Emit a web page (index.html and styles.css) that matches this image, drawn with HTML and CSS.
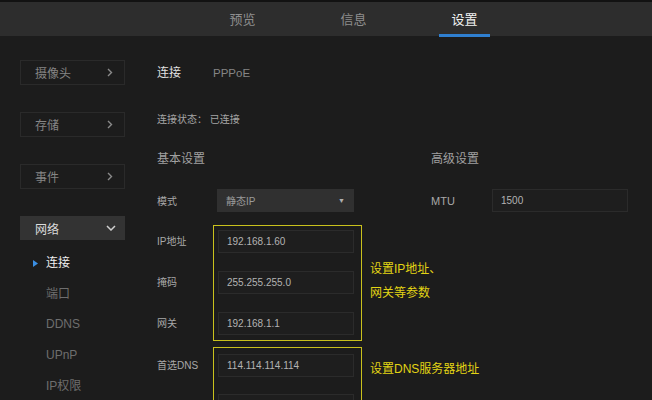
FILE: index.html
```html
<!DOCTYPE html>
<html lang="zh">
<head>
<meta charset="utf-8">
<title>设置</title>
<link rel="stylesheet" href="styles.css">
</head>
<body>
<header class="topbar">
  <nav class="tabs">
    <div class="tab">预览</div>
    <div class="tab">信息</div>
    <div class="tab active">设置</div>
  </nav>
</header>
<div class="layout">
  <aside class="sidebar">
    <div class="menu-box"><span>摄像头</span><svg class="chev" width="6" height="9" viewBox="0 0 6 9"><polyline points="1,1 4.5,4.5 1,8" fill="none" stroke="#8a8a8a" stroke-width="1.4"/></svg></div>
    <div class="menu-box"><span>存储</span><svg class="chev" width="6" height="9" viewBox="0 0 6 9"><polyline points="1,1 4.5,4.5 1,8" fill="none" stroke="#8a8a8a" stroke-width="1.4"/></svg></div>
    <div class="menu-box"><span>事件</span><svg class="chev" width="6" height="9" viewBox="0 0 6 9"><polyline points="1,1 4.5,4.5 1,8" fill="none" stroke="#8a8a8a" stroke-width="1.4"/></svg></div>
    <div class="menu-box open"><span>网络</span><svg class="chev-down" width="10" height="6" viewBox="0 0 10 6"><polyline points="1,1 5,5 9,1" fill="none" stroke="#cfcfcf" stroke-width="1.5"/></svg></div>
    <ul class="submenu">
      <li class="current"><svg class="marker" width="5" height="7" viewBox="0 0 5 7"><polygon points="0,0 5,3.5 0,7" fill="#3b8fe3"/></svg>连接</li>
      <li>端口</li>
      <li>DDNS</li>
      <li>UPnP</li>
      <li>IP权限</li>
    </ul>
  </aside>
  <main class="content">
    <div class="conn-tabs"><span class="conn-active">连接</span><span class="conn-other">PPPoE</span></div>
    <div class="status">连接状态： 已连接</div>
    <div class="two-col heads">
      <div class="section-title">基本设置</div>
      <div class="section-title">高级设置</div>
    </div>
    <div class="two-col">
      <div class="row">
        <label class="lbl lbl-mode">模式</label>
        <div class="select"><span>静态IP</span><span class="caret">▼</span></div>
      </div>
      <div class="row">
        <label class="lbl lbl-mtu">MTU</label>
        <div class="input">1500</div>
      </div>
    </div>
    <div class="group g1">
      <div class="labels">
        <div class="lbl">IP地址</div>
        <div class="lbl">掩码</div>
        <div class="lbl">网关</div>
      </div>
      <div class="frame">
        <div class="input">192.168.1.60</div>
        <div class="input">255.255.255.0</div>
        <div class="input">192.168.1.1</div>
      </div>
      <div class="note note1">设置IP地址、<br>网关等参数</div>
    </div>
    <div class="group g2">
      <div class="labels labels2">
        <div class="lbl">首选DNS</div>
      </div>
      <div class="frame frame2">
        <div class="input">114.114.114.114</div>
        <div class="input"></div>
      </div>
      <div class="note note2">设置DNS服务器地址</div>
    </div>
  </main>
</div>
</body>
</html>
```
FILE: styles.css
```css
* { box-sizing: border-box; }
html, body {
  margin: 0;
  padding: 0;
  width: 652px;
  height: 400px;
  overflow: hidden;
  background: #1c1c1c;
  font-family: "Liberation Sans", "Noto Sans CJK SC", sans-serif;
  color: #999;
}

.topbar {
  height: 36px;
  background: #2d2d2d;
  border-top: 2px solid #121212;
}
.tabs {
  display: flex;
  padding-left: 187px;
  height: 34px;
}
.tab {
  width: 111px;
  display: flex;
  justify-content: center;
  align-items: center;
  font-size: 13px;
  color: #8e8e8e;
  padding-bottom: 2px;
  position: relative;
}
.tab.active { color: #f2f2f2; }
.tab.active::after {
  content: "";
  position: absolute;
  left: 30px;
  right: 30px;
  bottom: -1px;
  height: 3px;
  background: #2f7fd0;
}

.layout { display: flex; }

.sidebar {
  width: 157px;
  padding-left: 20px;
  padding-top: 24px;
  flex-shrink: 0;
}
.menu-box {
  width: 105px;
  height: 25px;
  border: 1px solid #2a2a2a;
  display: flex;
  align-items: center;
  justify-content: space-between;
  padding: 0 11px 0 14px;
  font-size: 12px;
  color: #858585;
  margin-bottom: 27px;
}
.menu-box.open {
  background: #333333;
  border-color: #333333;
  color: #dcdcdc;
  height: 24px;
  margin-bottom: 8px;
  padding-right: 8px;
}
.submenu {
  list-style: none;
  margin: 0;
  padding: 0;
}
.submenu li {
  height: 30.7px;
  line-height: 31px;
  padding-left: 26px;
  font-size: 12px;
  color: #6e6e6e;
  position: relative;
}
.submenu li.current { color: #efefef; }
.marker {
  position: absolute;
  left: 13px;
  top: 12px;
}

.content {
  flex: 1;
  font-size: 10px;
}
.conn-tabs {
  margin-top: 28px;
  height: 18px;
  line-height: 18px;
  font-size: 12px;
  display: flex;
}
.conn-active { color: #e0e0e0; width: 56px; }
.conn-other { color: #858585; font-size: 11.5px; }
.status {
  margin-top: 30px;
  height: 16px;
  line-height: 16px;
  color: #a5a5a5;
}
.two-col {
  display: grid;
  grid-template-columns: 274px 1fr;
}
.heads {
  margin-top: 23px;
  height: 16px;
  line-height: 16px;
}
.section-title { font-size: 12px; color: #a0a0a0; }
.heads + .two-col { margin-top: 22px; }
.row {
  display: flex;
  align-items: center;
  height: 23px;
}
.lbl {
  color: #a8a8a8;
  font-size: 10px;
}
.lbl-mode { width: 60px; }
.lbl-mtu { width: 61px; font-size: 11px; }
.select {
  width: 137px;
  height: 23px;
  background: #303030;
  display: flex;
  align-items: center;
  justify-content: space-between;
  padding: 0 9px;
  color: #9a9a9a;
  font-size: 10px;
}
.caret { font-size: 7px; color: #b0b0b0; }
.input {
  width: 136px;
  height: 23px;
  background: #1e1e1e;
  border: 1px solid #2b2b2b;
  color: #b3b3b3;
  font-size: 10px;
  display: flex;
  align-items: center;
  padding-left: 8px;
}

.group {
  display: flex;
  align-items: flex-start;
}
.g1 { margin-top: 13px; }
.g2 { margin-top: 6px; }
.labels {
  width: 56px;
  padding-top: 5px;
  display: flex;
  flex-direction: column;
  gap: 18px;
}
.labels .lbl {
  height: 23px;
  line-height: 23px;
}
.labels2 { padding-top: 7px; gap: 17px; }
.frame {
  width: 149px;
  border: 1px solid #c9c11c;
  padding: 4px 0 5px 4px;
  display: flex;
  flex-direction: column;
  gap: 18px;
}
.frame2 { padding-top: 6px; gap: 17px; }
.note {
  margin-left: 8px;
  color: #e3d414;
  font-size: 12px;
  line-height: 24px;
}
.note1 { align-self: center; margin-top: -4px; }
.note2 { margin-top: 10px; }
```
